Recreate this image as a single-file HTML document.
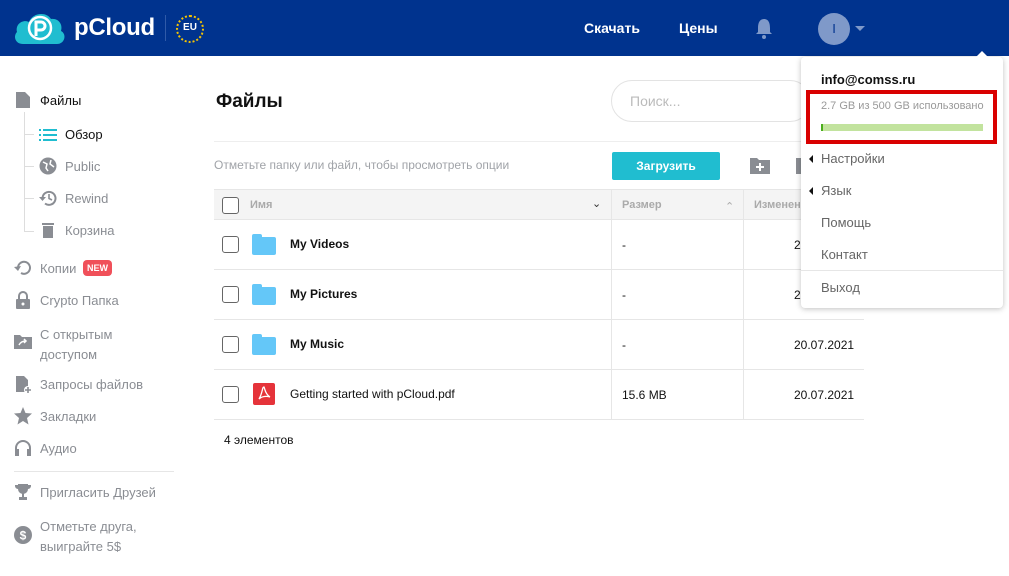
<!DOCTYPE html>
<html><head><meta charset="utf-8"><style>
*{box-sizing:border-box;margin:0;padding:0}
body{width:1009px;height:576px;overflow:hidden;background:#fff;font-family:"Liberation Sans",Arial,sans-serif;position:relative;color:#222}
.a{position:absolute}
.hdr{left:0;top:0;width:1009px;height:56px;background:#00338e}
.nav{color:#fff;font-weight:bold;font-size:14px}
.sb{font-size:13px;color:#8a8d93}
.ic{position:absolute;width:18px;height:18px}
.row{left:214px;width:650px;height:50px;border-bottom:1px solid #e6e6e6}
.cb{position:absolute;left:8px;width:17px;height:17px;border:1.5px solid #666;border-radius:3px}
.fold{position:absolute;left:38px;width:24px;height:18px;background:#64c7f8;border-radius:2px}
.fold:before{content:"";position:absolute;left:0;top:-3px;width:10px;height:5px;background:#64c7f8;border-radius:2px 2px 0 0}
.nm{position:absolute;left:76px;font-size:12px;font-weight:bold;color:#111}
.sz{position:absolute;left:408px;font-size:12px;color:#111}
.dt{position:absolute;left:580px;font-size:12px;color:#111}
.vl{position:absolute;top:0;width:1px;height:50px;background:#e6e6e6}
.mi{position:absolute;left:821px;font-size:13px;color:#666}
</style></head><body>
<div class="a hdr"></div>
<svg class="a" style="left:13px;top:10px" width="54" height="36" viewBox="0 0 54 36"><path d="M10 34 C2 34 0 26 4 22 C2 14 10 9 16 12 C19 3 33 1 38 9 C46 8 50 15 48 21 C54 24 52 34 44 34 Z" fill="#20bdd0"/><circle cx="27" cy="18" r="11" fill="none" stroke="#fff" stroke-width="2.5"/><path d="M23 26 V12 H28 a4 4 0 0 1 0 8 H23" fill="none" stroke="#fff" stroke-width="3"/></svg>
<div class="a" style="left:74px;top:14px;color:#fff;font-size:24px;font-weight:bold;letter-spacing:-0.3px">pCloud</div>
<div class="a" style="left:165px;top:15px;width:1px;height:26px;background:#2f5aa8"></div>
<div class="a" style="left:176px;top:15px;width:28px;height:28px;border-radius:50%;border:2px dotted #f5c400"></div>
<div class="a" style="left:176px;top:22px;width:28px;text-align:center;color:#fff;font-size:10px;font-weight:bold">EU</div>
<div class="a nav" style="left:584px;top:20px">Скачать</div>
<div class="a nav" style="left:679px;top:20px">Цены</div>
<svg class="a" style="left:754px;top:18px" width="20" height="22" viewBox="0 0 20 22"><path d="M10 1 C5 1 4 6 4 10 L4 14 L2 16 L18 16 L16 14 L16 10 C16 6 15 1 10 1Z" fill="#7f99c9"/><circle cx="10" cy="19" r="2" fill="#7f99c9"/></svg>
<div class="a" style="left:818px;top:13px;width:32px;height:32px;border-radius:50%;background:#7f99c9;color:#00338e;text-align:center;line-height:32px;font-size:13px">I</div>
<div class="a" style="left:855px;top:26px;width:0;height:0;border-left:5px solid transparent;border-right:5px solid transparent;border-top:5px solid #7f99c9"></div>

<!-- sidebar -->
<svg class="ic" style="left:14px;top:91px" viewBox="0 0 18 18"><path d="M2 1 H11 L16 6 V17 H2Z" fill="#8a8d93"/></svg>
<div class="a" style="left:40px;top:93px;font-size:13px;color:#111">Файлы</div>
<div class="a" style="left:24px;top:112px;width:1px;height:120px;background:#ddd"></div>
<div class="a" style="left:24px;top:134px;width:10px;height:1px;background:#ddd"></div>
<div class="a" style="left:24px;top:166px;width:10px;height:1px;background:#ddd"></div>
<div class="a" style="left:24px;top:198px;width:10px;height:1px;background:#ddd"></div>
<div class="a" style="left:24px;top:231px;width:10px;height:1px;background:#ddd"></div>
<svg class="ic" style="left:39px;top:126px" viewBox="0 0 18 18"><g fill="#20bdd0"><rect x="0" y="3" width="2" height="2"/><rect x="4" y="3" width="14" height="2"/><rect x="0" y="8" width="2" height="2"/><rect x="4" y="8" width="14" height="2"/><rect x="0" y="13" width="2" height="2"/><rect x="4" y="13" width="14" height="2"/></g></svg>
<div class="a" style="left:65px;top:127px;font-size:13px;color:#111">Обзор</div>
<svg class="ic" style="left:39px;top:157px" viewBox="0 0 18 18"><circle cx="9" cy="9" r="8.5" fill="#8a8d93"/><path d="M4 5 L8 7 L7 11 L9 14 M12 3 L11 7 L15 10" stroke="#fff" stroke-width="1.5" fill="none"/></svg>
<div class="a sb" style="left:65px;top:159px">Public</div>
<svg class="ic" style="left:39px;top:189px" viewBox="0 0 18 18"><path d="M3.5 9 A6.5 6.5 0 1 1 6 14.5" stroke="#8a8d93" stroke-width="2" fill="none"/><path d="M0 8 L3.5 12 L7 8Z" fill="#8a8d93"/><path d="M10 5 V9.5 L13 11" stroke="#8a8d93" stroke-width="1.6" fill="none"/></svg>
<div class="a sb" style="left:65px;top:191px">Rewind</div>
<svg class="ic" style="left:39px;top:221px" viewBox="0 0 18 18"><rect x="3" y="2" width="12" height="2" fill="#8a8d93"/><rect x="4" y="5" width="10" height="12" fill="#8a8d93"/></svg>
<div class="a sb" style="left:65px;top:223px">Корзина</div>
<svg class="ic" style="left:14px;top:259px" viewBox="0 0 18 18"><path d="M4 9 A6 6 0 1 1 7 14" stroke="#8a8d93" stroke-width="2" fill="none"/><path d="M0 8 L4 12 L7 7Z" fill="#8a8d93"/></svg>
<div class="a sb" style="left:40px;top:261px">Копии</div>
<div class="a" style="left:83px;top:260px;width:29px;height:16px;background:#f0505a;border-radius:4px;color:#fff;font-size:9px;font-weight:bold;text-align:center;line-height:16px">NEW</div>
<svg class="ic" style="left:14px;top:291px" viewBox="0 0 18 18"><path d="M5 8 V5 a4 4 0 0 1 8 0 V8" stroke="#8a8d93" stroke-width="2" fill="none"/><rect x="2" y="8" width="14" height="10" rx="1" fill="#8a8d93"/><circle cx="9" cy="13" r="1.5" fill="#fff"/></svg>
<div class="a sb" style="left:40px;top:293px">Crypto Папка</div>
<svg class="ic" style="left:14px;top:333px" viewBox="0 0 18 18"><path d="M0 2 H6 L8 4 H18 V16 H0Z" fill="#8a8d93"/><path d="M5 12 Q7 8 12 8 M10 6 L12 8 L10 10" stroke="#fff" stroke-width="1.5" fill="none"/></svg>
<div class="a sb" style="left:40px;top:325px;line-height:20px">С открытым<br>доступом</div>
<svg class="ic" style="left:14px;top:375px" viewBox="0 0 18 18"><path d="M2 1 H10 L14 5 V17 H2Z" fill="#8a8d93"/><circle cx="14" cy="15" r="4" fill="#fff"/><path d="M14 12 V18 M11 15 H17" stroke="#8a8d93" stroke-width="1.6"/></svg>
<div class="a sb" style="left:40px;top:377px">Запросы файлов</div>
<svg class="ic" style="left:14px;top:407px" viewBox="0 0 18 18"><path d="M9 0 L11.5 6 L18 6.5 L13 11 L14.5 17.5 L9 14 L3.5 17.5 L5 11 L0 6.5 L6.5 6Z" fill="#8a8d93"/></svg>
<div class="a sb" style="left:40px;top:409px">Закладки</div>
<svg class="ic" style="left:14px;top:439px" viewBox="0 0 18 18"><path d="M2 12 V9 a7 7 0 0 1 14 0 V12" stroke="#8a8d93" stroke-width="2" fill="none"/><rect x="1" y="10" width="4" height="7" fill="#8a8d93"/><rect x="13" y="10" width="4" height="7" fill="#8a8d93"/></svg>
<div class="a sb" style="left:40px;top:441px">Аудио</div>
<div class="a" style="left:14px;top:471px;width:160px;height:1px;background:#e6e6e6"></div>
<svg class="ic" style="left:14px;top:483px" viewBox="0 0 18 18"><path d="M4 1 H14 V6 a5 5 0 0 1 -10 0Z M1 2 H4 V6 a3 3 0 0 1 -3-3Z M14 2 H17 V3 a3 3 0 0 1 -3 3Z" fill="#8a8d93"/><rect x="8" y="10" width="2" height="4" fill="#8a8d93"/><rect x="5" y="14" width="8" height="3" fill="#8a8d93"/></svg>
<div class="a sb" style="left:40px;top:485px">Пригласить Друзей</div>
<svg class="ic" style="left:14px;top:526px" viewBox="0 0 18 18"><circle cx="9" cy="9" r="9" fill="#8a8d93"/><text x="9" y="13.5" font-size="12" font-weight="bold" fill="#fff" text-anchor="middle" font-family="Liberation Sans">$</text></svg>
<div class="a sb" style="left:40px;top:517px;line-height:20px">Отметьте друга,<br>выиграйте 5$</div>

<!-- main -->
<div class="a" style="left:216px;top:91px;font-size:19px;font-weight:bold;color:#111">Файлы</div>
<div class="a" style="left:611px;top:80px;width:200px;height:42px;border:1px solid #e3e3e3;border-radius:21px"></div>
<div class="a" style="left:630px;top:93px;font-size:14px;color:#bbb">Поиск...</div>
<div class="a" style="left:214px;top:141px;width:600px;height:1px;background:#eee"></div>
<div class="a" style="left:214px;top:158px;font-size:12px;color:#a0a3a8">Отметьте папку или файл, чтобы просмотреть опции</div>
<div class="a" style="left:612px;top:152px;width:108px;height:28px;background:#20bdd0;border-radius:2px;color:#fff;font-size:12px;font-weight:bold;text-align:center;line-height:28px">Загрузить</div>
<svg class="a" style="left:750px;top:157px" width="20" height="17" viewBox="0 0 20 17"><path d="M0 1 H7 L9 3 H20 V17 H0Z" fill="#8a8d93"/><path d="M10 6 V14 M6 10 H14" stroke="#fff" stroke-width="2"/></svg>
<div class="a" style="left:796px;top:158px;width:5px;height:16px;background:#8a8d93"></div>

<div class="a" style="left:214px;top:189px;width:650px;height:31px;background:#f4f4f4;border-top:1px solid #e6e6e6;border-bottom:1px solid #e6e6e6"></div>
<div class="a" style="left:222px;top:197px;width:17px;height:17px;border:1.5px solid #666;border-radius:3px;background:#fff"></div>
<div class="a" style="left:250px;top:199px;font-size:11px;font-weight:bold;color:#aaa">Имя</div>
<div class="a" style="left:592px;top:197px;font-size:11px;color:#333">&#8964;</div>
<div class="a" style="left:611px;top:190px;width:1px;height:30px;background:#e6e6e6"></div>
<div class="a" style="left:622px;top:199px;font-size:11px;font-weight:bold;color:#aaa">Размер</div>
<div class="a" style="left:725px;top:200px;font-size:11px;color:#aaa">&#8963;</div>
<div class="a" style="left:743px;top:190px;width:1px;height:30px;background:#e6e6e6"></div>
<div class="a" style="left:754px;top:199px;font-size:11px;font-weight:bold;color:#aaa">Изменен</div>

<div class="a row" style="top:220px"><div class="cb" style="top:16px"></div><div class="fold" style="top:17px"></div><div class="nm" style="top:17px">My Videos</div><div class="vl" style="left:397px"></div><div class="sz" style="top:18px">-</div><div class="vl" style="left:529px"></div><div class="dt" style="top:18px">20.07.2021</div></div>
<div class="a row" style="top:270px"><div class="cb" style="top:16px"></div><div class="fold" style="top:17px"></div><div class="nm" style="top:17px">My Pictures</div><div class="vl" style="left:397px"></div><div class="sz" style="top:18px">-</div><div class="vl" style="left:529px"></div><div class="dt" style="top:18px">20.07.2021</div></div>
<div class="a row" style="top:320px"><div class="cb" style="top:16px"></div><div class="fold" style="top:17px"></div><div class="nm" style="top:17px">My Music</div><div class="vl" style="left:397px"></div><div class="sz" style="top:18px">-</div><div class="vl" style="left:529px"></div><div class="dt" style="top:18px">20.07.2021</div></div>
<div class="a row" style="top:370px"><div class="cb" style="top:16px"></div><svg style="position:absolute;left:39px;top:13px" width="22" height="22" viewBox="0 0 22 22"><rect width="22" height="22" rx="2" fill="#e5333a"/><path d="M11 4 C9 4 10 9 6 16 C9 13 14 13 17 14 C12 11 12 6 11 4Z" stroke="#fff" stroke-width="1.3" fill="none"/></svg><div class="nm" style="top:17px;font-weight:normal">Getting started with pCloud.pdf</div><div class="vl" style="left:397px"></div><div class="sz" style="top:18px">15.6 MB</div><div class="vl" style="left:529px"></div><div class="dt" style="top:18px">20.07.2021</div></div>
<div class="a" style="left:224px;top:433px;font-size:12px;color:#111">4 элементов</div>

<!-- dropdown -->
<div class="a" style="left:801px;top:57px;width:202px;height:251px;background:#fff;border-radius:4px;box-shadow:0 1px 6px rgba(0,0,0,.25)"></div>
<div class="a" style="left:975px;top:51px;width:0;height:0;border-left:7px solid transparent;border-right:7px solid transparent;border-bottom:7px solid #fff"></div>
<div class="a" style="left:821px;top:72px;font-size:13px;font-weight:bold;color:#111">info@comss.ru</div>
<div class="a" style="left:806px;top:90px;width:191px;height:54px;border:4px solid #d90000"></div>
<div class="a" style="left:821px;top:100px;font-size:11px;color:#999">2.7 GB из 500 GB использовано</div>
<div class="a" style="left:821px;top:124px;width:162px;height:7px;background:#c2e39e"></div>
<div class="a" style="left:821px;top:124px;width:2px;height:7px;background:#4aad1c"></div>
<div class="a" style="left:809px;top:155px;width:0;height:0;border-top:4px solid transparent;border-bottom:4px solid transparent;border-right:4px solid #111"></div>
<div class="a mi" style="top:151px">Настройки</div>
<div class="a" style="left:809px;top:187px;width:0;height:0;border-top:4px solid transparent;border-bottom:4px solid transparent;border-right:4px solid #111"></div>
<div class="a mi" style="top:183px">Язык</div>
<div class="a mi" style="top:215px">Помощь</div>
<div class="a mi" style="top:247px">Контакт</div>
<div class="a" style="left:801px;top:270px;width:202px;height:1px;background:#e6e6e6"></div>
<div class="a mi" style="top:280px">Выход</div>
</body></html>
